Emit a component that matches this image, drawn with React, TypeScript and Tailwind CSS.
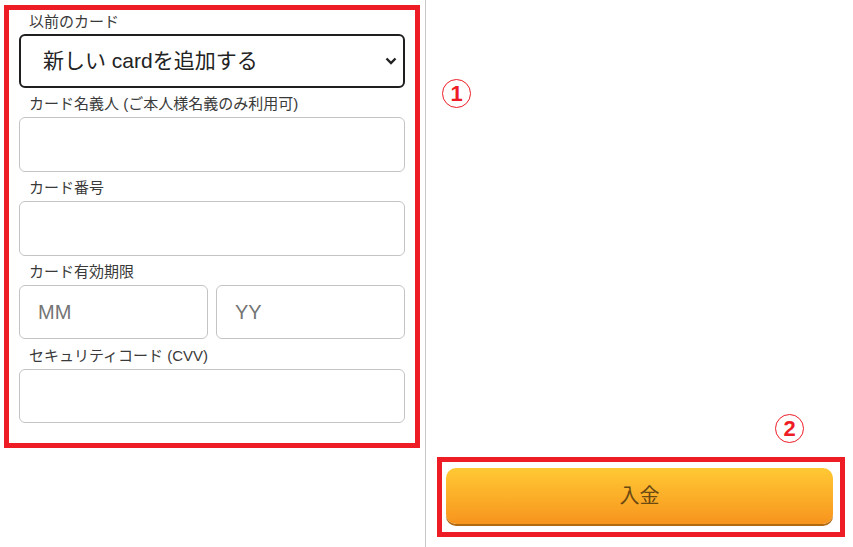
import React from "react";

const jp = "font-['Liberation_Sans','Noto_Sans_CJK_JP',sans-serif]";

function Label({ text }: { text: string }) {
  return (
    <div className="flex h-[29px] items-end pb-[4px] pl-[10px] text-[15px] leading-[18px] text-[#3a3a3a]">
      {text}
    </div>
  );
}

function Field({ placeholder }: { placeholder?: string }) {
  return (
    <div className="flex h-[55px] w-full items-center rounded-[6px] border border-[#c4c4c4] bg-white pl-[18px] text-[20px] text-[#757575]">
      {placeholder}
    </div>
  );
}

function Circled({ n }: { n: string }) {
  return (
    <span className="flex h-[29px] w-[29px] items-center justify-center rounded-full border border-[#ee1c25] text-[22px] font-black leading-none text-[#ee1c25]">
      {n}
    </span>
  );
}

export default function App() {
  return (
    <div className={`flex h-[547px] w-[853px] bg-white ${jp}`}>
      <div className="w-[426px] shrink-0 border-r border-[#c8c8c8] pl-[4px] pt-[5px]">
        <div className="w-[416px] border-[5px] border-[#ee1c25] px-[10px] pb-[20px]">
          <div className="flex h-[24px] items-end pb-[3px] pl-[10px] text-[15px] leading-[18px] text-[#3a3a3a]">
            以前のカード
          </div>
          <div className="flex h-[54px] items-center justify-between rounded-[6px] border-2 border-[#1f1f1f] pl-[22px] pr-[6px] text-[21px] text-[#222]">
            <span>新しい cardを追加する</span>
            <svg width="12" height="8" viewBox="0 0 12 8">
              <polyline points="1.5,1.5 6,6 10.5,1.5" fill="none" stroke="#222" strokeWidth="2.4" />
            </svg>
          </div>
          <Label text="カード名義人 (ご本人様名義のみ利用可)" />
          <Field />
          <Label text="カード番号" />
          <Field />
          <Label text="カード有効期限" />
          <div className="flex gap-[8px]">
            <div className="flex h-[54px] flex-1 items-center rounded-[6px] border border-[#c4c4c4] pl-[18px] text-[20px] text-[#757575]">
              MM
            </div>
            <div className="flex h-[54px] flex-1 items-center rounded-[6px] border border-[#c4c4c4] pl-[18px] text-[20px] text-[#757575]">
              YY
            </div>
          </div>
          <div className="flex h-[30px] items-end pb-[4px] pl-[10px] text-[15px] leading-[18px] text-[#3a3a3a]">
            セキュリティコード (CVV)
          </div>
          <div className="h-[54px] rounded-[6px] border border-[#c4c4c4]" />
        </div>
      </div>
      <div className="flex flex-1 flex-col">
        <div className="pl-[16px] pt-[79px]">
          <Circled n="1" />
        </div>
        <div className="mt-auto flex justify-end pr-[49px]">
          <Circled n="2" />
        </div>
        <div className="mb-[10px] ml-[11px] mr-[8px] mt-[14px] border-[5px] border-[#ee1c25] pb-[8px] pl-[4px] pr-[7px] pt-[6px]">
          <div className="flex h-[56px] items-center justify-center rounded-[10px] bg-gradient-to-b from-[#ffc934] to-[#f7941d] text-[20px] text-[#6b4a12] shadow-[0_2px_0_#b06a10]">
            入金
          </div>
        </div>
      </div>
    </div>
  );
}
